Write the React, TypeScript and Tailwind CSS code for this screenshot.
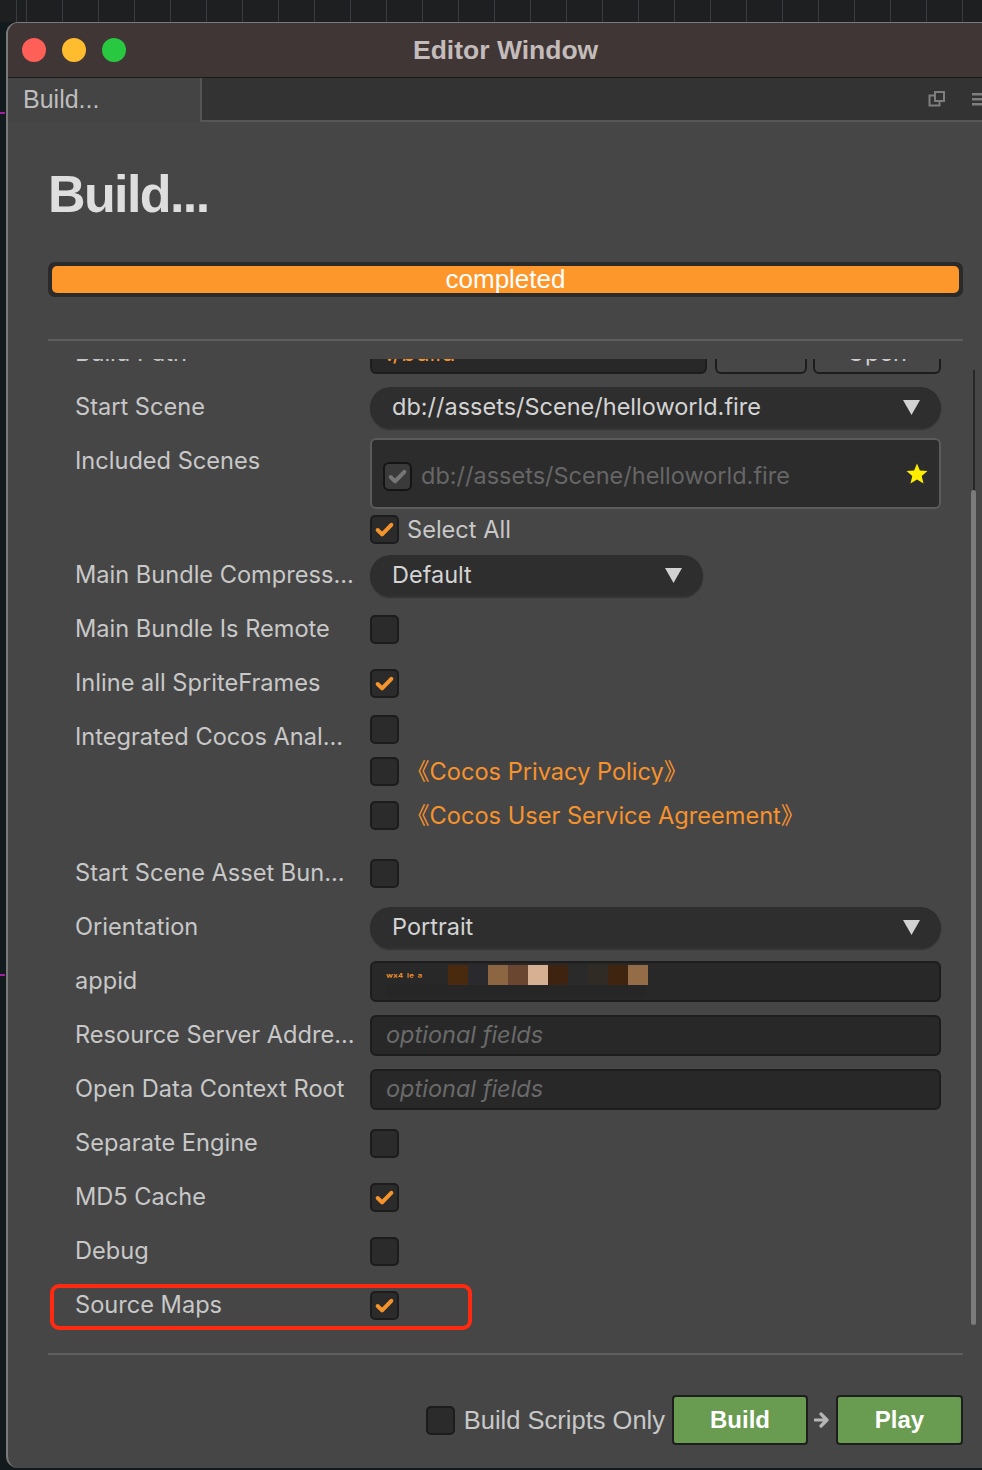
import React from "react";

type CheckProps = { checked?: boolean; disabled?: boolean };

const CheckBox = ({ checked, disabled }: CheckProps) => (
  <div
    className={
      disabled
        ? "flex h-[29px] w-[29px] shrink-0 items-center justify-center rounded-[6px] border-2 border-[#151515] bg-[#3a3a3a]"
        : "flex h-[29px] w-[29px] shrink-0 items-center justify-center rounded-[5px] border-2 border-[#1c1c1c] bg-[#2b2b2b]"
    }
  >
    {checked && (
      <svg width="21" height="21" viewBox="0 0 20 20">
        <path
          d="M3.5 10.5l4.2 4.2L16.5 5.5"
          fill="none"
          stroke={disabled ? "#767676" : "#f5942c"}
          strokeWidth="3.8"
          strokeLinecap="round"
          strokeLinejoin="round"
        />
      </svg>
    )}
  </div>
);

const Caret = () => (
  <svg width="17" height="15" viewBox="0 0 17 15">
    <polygon points="0,0 17,0 8.5,15" fill="#d2d2d2" />
  </svg>
);

const Select = ({ value, width }: { value: string; width: string }) => (
  <div
    className={`flex h-[41px] ${width} items-center justify-between rounded-full bg-[#2e2e2e] pl-[22px] pr-[21px] shadow-[0_2px_1px_#333333] text-[23.5px] text-[#d4d4d4]`}
  >
    <span>{value}</span>
    <Caret />
  </div>
);

const Input = ({ children }: { children?: React.ReactNode }) => (
  <div className="flex h-[41px] w-[571px] items-center overflow-hidden rounded-[6px] border-2 border-[#1d1d1d] bg-[#282828] pl-[14px]">
    {children}
  </div>
);

const Placeholder = () => (
  <span className="text-[23.5px] italic text-[#6a6a6a]">optional fields</span>
);

const Row = ({
  label,
  children,
  h = "h-[54px]",
  top = false,
}: {
  label: string;
  children?: React.ReactNode;
  h?: string;
  top?: boolean;
}) => (
  <div className={`relative flex ${h} ${top ? "items-start" : "items-center"} pl-[27px]`}>
    <div className="flex h-[54px] w-[295px] shrink-0 items-center text-[23.6px] text-[#c8c8c8]">
      {label}
    </div>
    <div className={`flex w-[571px] ${top ? "flex-col self-stretch" : "items-center"}`}>
      {children}
    </div>
  </div>
);

const blocks = [
  "bg-[#4a2a0e]",
  "bg-[#2a2a2e]",
  "bg-[#8c6642]",
  "bg-[#6a4530]",
  "bg-[#d6b092]",
  "bg-[#3e2410]",
  "bg-[#2a2a2a]",
  "bg-[#302b24]",
  "bg-[#3f2510]",
  "bg-[#946c48]",
];

export default function App() {
  return (
    <div className="relative h-[1470px] w-[982px] overflow-hidden bg-[#121a1e] font-['Inter','Noto_Sans_CJK_SC',sans-serif]">
      {/* backdrop strip */}
      <div className="h-[22px] bg-[#1d1f20] bg-[repeating-linear-gradient(90deg,#3a3d3f_0_1px,transparent_1px_36px)] bg-[position:26px_0]" />
      <div className="absolute left-0 top-[112px] h-[2px] w-[5px] bg-[#a020a0]" />
      <div className="absolute left-0 top-[974px] h-[2px] w-[5px] bg-[#a020a0]" />

      {/* window */}
      <div className="ml-[6px] flex h-[1446px] w-[976px] flex-col overflow-hidden rounded-l-[12px] border-l-2 border-t border-[#7a7a7a] bg-[#464646]">
        {/* title bar */}
        <div className="relative flex h-[55px] shrink-0 items-center border-b border-[#1a1a1a] bg-[#403636]">
          <div className="flex items-center gap-[16px] pl-[14px]">
            <div className="h-[24px] w-[24px] rounded-full bg-[#fe5f57]" />
            <div className="h-[24px] w-[24px] rounded-full bg-[#febc2e]" />
            <div className="h-[24px] w-[24px] rounded-full bg-[#28c840]" />
          </div>
          <div className="absolute left-[405px] top-[8px] font-['Liberation_Sans',sans-serif] text-[26.5px] font-bold text-[#c4bcba]">
            Editor Window
          </div>
        </div>

        {/* tab bar */}
        <div className="flex h-[44px] shrink-0 bg-[#333333]">
          <div className="flex w-[194px] items-center border-r-2 border-[#555555] bg-[#444444] pl-[15px] font-['Liberation_Sans',sans-serif] text-[25px] text-[#bdbdbd]">
            Build...
          </div>
          <div className="flex flex-1 items-center justify-end gap-[26px] border-b-2 border-[#575757] pr-0">
            <svg width="18" height="18" viewBox="0 0 18 18">
              <rect x="1.5" y="5.5" width="10" height="10" fill="none" stroke="#7e7e7e" strokeWidth="2" />
              <rect x="6" y="1" width="11" height="11" fill="#7e7e7e" />
              <rect x="8" y="3" width="7" height="7" fill="#333333" />
            </svg>
            <svg width="10" height="16" viewBox="0 0 10 16">
              <rect x="0" y="2" width="10" height="2.5" fill="#7e7e7e" />
              <rect x="0" y="7" width="10" height="2.5" fill="#7e7e7e" />
              <rect x="0" y="12" width="10" height="2.5" fill="#7e7e7e" />
            </svg>
          </div>
        </div>

        {/* panel */}
        <div className="flex flex-1 flex-col pl-[40px]">
          <h1 className="mt-[46px] h-[52px] font-['Liberation_Sans',sans-serif] text-[52px] font-bold leading-[52px] tracking-[-1.6px] text-[#dedede]">
            Build...
          </h1>

          <div className="mt-[42px] h-[35px] w-[915px] rounded-[7px] bg-[#2a2a2a] p-[4px]">
            <div className="flex h-full items-center justify-center rounded-[5px] bg-[#fd962b] font-['Liberation_Sans',sans-serif] text-[26px] text-white">
              completed
            </div>
          </div>

          <div className="mt-[42px] h-[2px] w-[915px] bg-[#5e5e5e]" />

          {/* scroll area */}
          <div className="mt-[18px] flex h-[978px]">
            <div className="w-[915px] overflow-hidden">
              <div className="-mt-[33px]">
                <Row label="Build Path">
                  <div className="flex h-[41px] w-[337px] items-center rounded-[6px] border-2 border-[#1d1d1d] bg-[#282828] pl-[14px] text-[23.5px] text-[#f5942c]">
                    ./build
                  </div>
                  <div className="ml-[8px] h-[41px] w-[92px] rounded-[6px] border-2 border-[#1d1d1d] bg-[#474747]" />
                  <div className="ml-[6px] flex h-[41px] w-[128px] items-center justify-center rounded-[6px] border-2 border-[#1d1d1d] bg-[#474747] text-[23.5px] text-[#cfcfcf]">
                    Open
                  </div>
                </Row>
                <Row label="Start Scene">
                  <Select value="db://assets/Scene/helloworld.fire" width="w-[571px]" />
                </Row>
                <Row label="Included Scenes" h="h-[114px]" top>
                  <div className="mt-[4px] flex h-[71px] w-[571px] items-center justify-between rounded-[6px] border-2 border-[#5b5b5b] bg-[#2c2c2c] pl-[11px] pr-[10px] pt-[5px]">
                    <div className="flex items-center gap-[9px]">
                      <CheckBox checked disabled />
                      <span className="text-[23.5px] text-[#666666]">db://assets/Scene/helloworld.fire</span>
                    </div>
                    <svg className="-mt-[5px]" width="24" height="24" viewBox="0 0 24 24">
                      <polygon
                        points="12,1.5 14.9,8.4 22.5,9 16.7,13.9 18.5,21.5 12,17.4 5.5,21.5 7.3,13.9 1.5,9 9.1,8.4"
                        fill="#ffee00"
                      />
                    </svg>
                  </div>
                  <div className="mt-[3px] flex items-center gap-[8px]">
                    <CheckBox checked />
                    <span className="text-[23.6px] text-[#c8c8c8]">Select All</span>
                  </div>
                </Row>
                <Row label="Main Bundle Compress...">
                  <Select value="Default" width="w-[333px]" />
                </Row>
                <Row label="Main Bundle Is Remote">
                  <CheckBox />
                </Row>
                <Row label="Inline all SpriteFrames">
                  <CheckBox checked />
                </Row>
                <Row label="Integrated Cocos Anal..." h="h-[136px]" top>
                  <div className="mt-[5px] flex h-[29px] items-center">
                    <CheckBox />
                  </div>
                  <div className="mt-[13px] flex h-[29px] items-center gap-[7px]">
                    <CheckBox />
                    <span className="text-[23.6px] text-[#f7922c]">《Cocos Privacy Policy》</span>
                  </div>
                  <div className="mt-[15px] flex h-[29px] items-center gap-[7px]">
                    <CheckBox />
                    <span className="text-[23.6px] text-[#f7922c]">《Cocos User Service Agreement》</span>
                  </div>
                </Row>
                <Row label="Start Scene Asset Bun...">
                  <CheckBox />
                </Row>
                <Row label="Orientation">
                  <Select value="Portrait" width="w-[571px]" />
                </Row>
                <Row label="appid">
                  <Input>
                    <div className="flex flex-col">
                      <div className="flex h-[20px] items-end">
                        <span className="w-[62px] text-[12px] leading-[12px] text-[#f5942c]">ʷˣ⁴ ˡᵉ ᵃ</span>
                        {blocks.map((c, i) => (
                          <div key={i} className={`h-[20px] w-[20px] ${c}`} />
                        ))}
                      </div>
                      <div className="h-[12px] w-[260px] bg-[#262626]" />
                    </div>
                  </Input>
                </Row>
                <Row label="Resource Server Addre...">
                  <Input>
                    <Placeholder />
                  </Input>
                </Row>
                <Row label="Open Data Context Root">
                  <Input>
                    <Placeholder />
                  </Input>
                </Row>
                <Row label="Separate Engine">
                  <CheckBox />
                </Row>
                <Row label="MD5 Cache">
                  <CheckBox checked />
                </Row>
                <Row label="Debug">
                  <CheckBox />
                </Row>
                <Row label="Source Maps">
                  <CheckBox checked />
                  <div className="absolute left-[2px] top-[6px] h-[46px] w-[422px] rounded-[9px] border-4 border-[#ff2a10]" />
                </Row>
              </div>
            </div>
            {/* scrollbar */}
            <div className="ml-[8px] mt-[11px] flex h-[955px] w-[5px] flex-col">
              <div className="ml-[2px] h-[120px] w-[2px] bg-[#262626]" />
              <div className="flex-1 rounded-full bg-[#7b7b7b]" />
            </div>
          </div>

          <div className="mt-[16px] h-[2px] w-[915px] bg-[#5e5e5e]" />

          {/* footer */}
          <div className="mt-[40px] flex w-[915px] items-center justify-end">
            <CheckBox />
            <span className="ml-[9px] font-['Liberation_Sans',sans-serif] text-[25.5px] text-[#c8c8c8]">
              Build Scripts Only
            </span>
            <button className="ml-[7px] flex h-[50px] w-[136px] items-center justify-center rounded-[4px] border-2 border-[#1e1e1e] bg-[#699b50] font-['Liberation_Sans',sans-serif] text-[24px] font-bold text-white">
              Build
            </button>
            <svg className="mx-[6px]" width="16" height="20" viewBox="0 0 16 20">
              <path d="M1 10h11M7 4l6 6-6 6" fill="none" stroke="#b5b5b5" strokeWidth="3.2" strokeLinecap="round" strokeLinejoin="round" />
            </svg>
            <button className="flex h-[50px] w-[127px] items-center justify-center rounded-[4px] border-2 border-[#1e1e1e] bg-[#699b50] font-['Liberation_Sans',sans-serif] text-[24px] font-bold text-white">
              Play
            </button>
          </div>
        </div>
      </div>
    </div>
  );
}
